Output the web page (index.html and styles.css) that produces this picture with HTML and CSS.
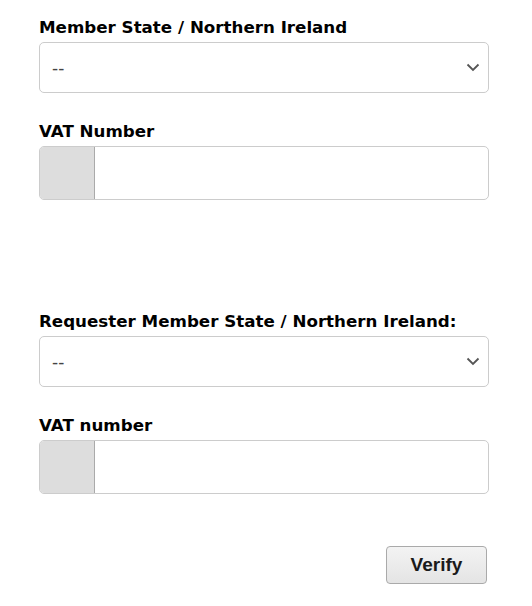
FILE: index.html
```html
<!DOCTYPE html>
<html lang="en">
<head>
<meta charset="utf-8">
<link rel="stylesheet" href="styles.css">
</head>
<body>
<form class="form">
  <div class="field">
    <label class="label">Member State / Northern Ireland</label>
    <div class="select">
      <span class="select-value">--</span>
      <svg class="chevron" width="14" height="9" viewBox="0 0 14 9"><path d="M1.5 1.5 L7 7 L12.5 1.5" fill="none" stroke="#555" stroke-width="1.8"/></svg>
    </div>
  </div>
  <div class="field">
    <label class="label">VAT Number</label>
    <div class="input-group">
      <span class="prefix"></span>
      <span class="input"></span>
    </div>
  </div>
  <div class="spacer"></div>
  <div class="field">
    <label class="label">Requester Member State / Northern Ireland:</label>
    <div class="select">
      <span class="select-value">--</span>
      <svg class="chevron" width="14" height="9" viewBox="0 0 14 9"><path d="M1.5 1.5 L7 7 L12.5 1.5" fill="none" stroke="#555" stroke-width="1.8"/></svg>
    </div>
  </div>
  <div class="field">
    <label class="label">VAT number</label>
    <div class="input-group">
      <span class="prefix"></span>
      <span class="input"></span>
    </div>
  </div>
  <div class="actions">
    <button type="button" class="btn">Verify</button>
  </div>
</form>
</body>
</html>
```
FILE: styles.css
```css
html, body { margin: 0; padding: 0; background: #fff; }
body { font-family: "DejaVu Sans", Verdana, sans-serif; color: #000; }
.form { width: 450px; margin-left: 39px; padding-top: 17px; display: flex; flex-direction: column; }
.field { display: flex; flex-direction: column; }
.field + .field { margin-top: 28px; }
.label { font-weight: bold; font-size: 16.7px; line-height: 20px; margin-bottom: 5px; }
.select { height: 51px; box-sizing: border-box; border: 1px solid #ccc; border-radius: 5px; display: flex; align-items: center; justify-content: space-between; padding: 0 8px 0 12px; }
.select-value { font-size: 17px; color: #444; }
.chevron { display: block; }
.input-group { display: flex; height: 54px; box-sizing: border-box; border: 1px solid #ccc; border-radius: 5px; overflow: hidden; }
.prefix { width: 54px; background: #ddd; border-right: 1px solid #aaa; }
.input { flex: 1; }
.spacer { height: 111px; }
.actions { display: flex; justify-content: flex-end; margin-top: 52px; margin-right: 2px; }
.btn { width: 101px; height: 38px; border: 1px solid #aaa; border-radius: 4px; background: linear-gradient(#f3f3f3, #e4e4e4); font-family: "Liberation Sans", Arial, sans-serif; font-weight: bold; font-size: 19px; color: #1a1a1a; padding: 0; }
```
